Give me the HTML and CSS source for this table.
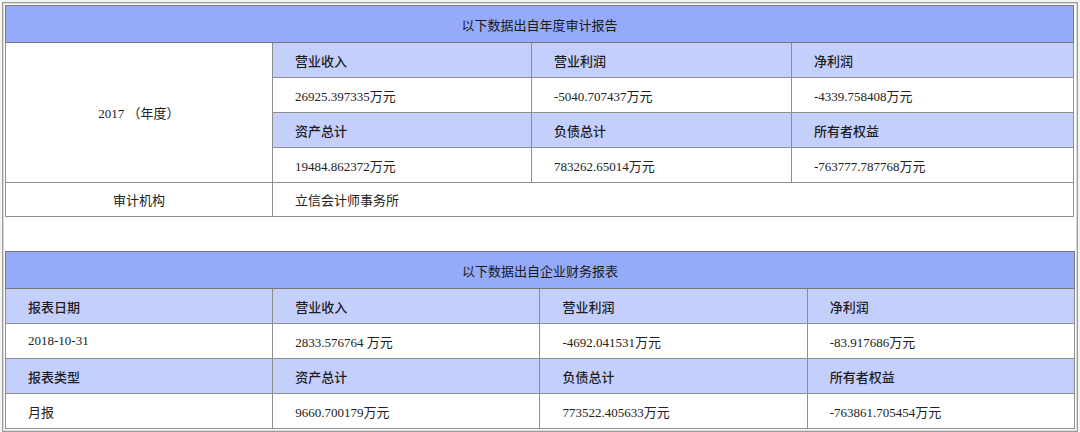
FILE: index.html
```html
<!DOCTYPE html>
<html lang="zh-CN">
<head>
<meta charset="utf-8">
<title>财务数据</title>
<link rel="stylesheet" href="styles.css">
</head>
<body>
<div class="frame">
  <table class="grid audit">
    <colgroup>
      <col class="a1"><col class="a2"><col class="a3"><col class="a4">
    </colgroup>
    <tr class="title-row"><th class="title" colspan="4">以下数据出自年度审计报告</th></tr>
    <tr><td class="center blank" rowspan="4">2017 （年度）</td><th>营业收入</th><th>营业利润</th><th>净利润</th></tr>
    <tr><td>26925.397335万元</td><td>-5040.707437万元</td><td>-4339.758408万元</td></tr>
    <tr><th>资产总计</th><th>负债总计</th><th>所有者权益</th></tr>
    <tr><td>19484.862372万元</td><td>783262.65014万元</td><td>-763777.787768万元</td></tr>
    <tr class="last"><td class="center">审计机构</td><td colspan="3">立信会计师事务所</td></tr>
  </table>
  <div class="gap"></div>
  <table class="grid report">
    <colgroup>
      <col class="b"><col class="b"><col class="b"><col class="b">
    </colgroup>
    <tr class="title-row"><th class="title" colspan="4">以下数据出自企业财务报表</th></tr>
    <tr><th>报表日期</th><th>营业收入</th><th>营业利润</th><th>净利润</th></tr>
    <tr><td>2018-10-31</td><td>2833.576764 万元</td><td>-4692.041531万元</td><td>-83.917686万元</td></tr>
    <tr><th>报表类型</th><th>资产总计</th><th>负债总计</th><th>所有者权益</th></tr>
    <tr><td>月报</td><td>9660.700179万元</td><td>773522.405633万元</td><td>-763861.705454万元</td></tr>
  </table>
</div>
</body>
</html>
```

FILE: styles.css
```css
html, body {
  margin: 0;
  padding: 0;
  background: #f4f4f4;
}

body {
  font-family: "Liberation Serif", "Noto Sans CJK SC", serif;
  font-size: 13px;
  color: #222;
}

.frame {
  margin: 2px 0 0 2px;
  width: 1070px;
  border: 1px solid #9c9c9c;
  padding: 2px;
  background: #fff;
  box-shadow: inset 0 0 0 1px #d8d8d8;
}

.grid {
  border-collapse: collapse;
  table-layout: fixed;
  background: #fff;
}

.audit { width: 1068px; }
.report { width: 1070px; }

.a1 { width: 267px; }
.a2 { width: 259px; }
.a3 { width: 260px; }
.a4 { width: 282px; }
.b { width: 267px; }

.grid tr { height: 35px; }
.grid tr.title-row { height: 37px; }
.audit tr.last { height: 34px; }

.grid th,
.grid td {
  border: 1px solid #8e8e8e;
  padding: 0 0 0 22px;
  text-align: left;
  vertical-align: middle;
  font-weight: normal;
  white-space: nowrap;
}

.grid th {
  background: #c5cffb;
  font-weight: 500;
  color: #1e1e1e;
}

.grid th.title {
  background: #95aaf9;
  border-color: #777;
  text-align: center;
  padding: 0;
  font-weight: normal;
  color: #1a1a1a;
}

.grid td.center {
  text-align: center;
  padding: 0;
}

.gap {
  height: 34px;
}
```
